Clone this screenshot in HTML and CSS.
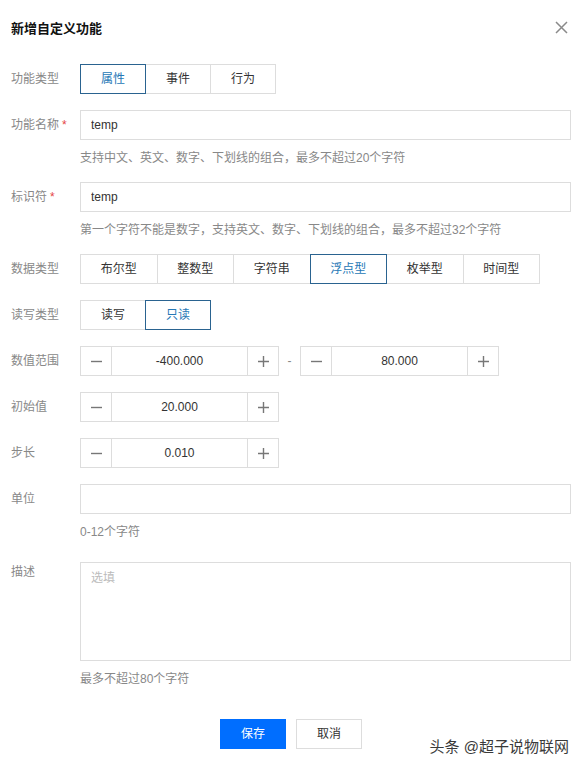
FILE: index.html
```html
<!DOCTYPE html>
<html lang="zh-CN">
<head>
<meta charset="utf-8">
<title>新增自定义功能</title>
<link rel="stylesheet" href="styles.css">
</head>
<body>
<div class="dialog">
  <div class="header">
    <h1 class="title">新增自定义功能</h1>
    <svg class="close" width="13" height="13" viewBox="0 0 13 13"><path d="M1 1L12 12M12 1L1 12" stroke="#8a8a8a" stroke-width="1.5" fill="none"/></svg>
  </div>

  <div class="form">
    <div class="field">
      <div class="label">功能类型</div>
      <div class="seg">
        <span class="seg-btn w65 active">属性</span>
        <span class="seg-btn w65">事件</span>
        <span class="seg-btn w65">行为</span>
      </div>
    </div>

    <div class="field tight">
      <div class="label">功能名称<span class="req">*</span></div>
      <input class="text" type="text" value="temp">
      <div class="hint">支持中文、英文、数字、下划线的组合，最多不超过20个字符</div>
    </div>

    <div class="field tight">
      <div class="label">标识符<span class="req">*</span></div>
      <input class="text" type="text" value="temp">
      <div class="hint">第一个字符不能是数字，支持英文、数字、下划线的组合，最多不超过32个字符</div>
    </div>

    <div class="field">
      <div class="label">数据类型</div>
      <div class="seg">
        <span class="seg-btn w77">布尔型</span>
        <span class="seg-btn w77">整数型</span>
        <span class="seg-btn w77">字符串</span>
        <span class="seg-btn w77 active">浮点型</span>
        <span class="seg-btn w77">枚举型</span>
        <span class="seg-btn w77">时间型</span>
      </div>
    </div>

    <div class="field">
      <div class="label">读写类型</div>
      <div class="seg">
        <span class="seg-btn w65">读写</span>
        <span class="seg-btn w65 active">只读</span>
      </div>
    </div>

    <div class="field">
      <div class="label">数值范围</div>
      <div class="range">
        <div class="stepper">
          <span class="step-btn"><svg width="11" height="11" viewBox="0 0 11 11"><path d="M0 5.5H11" stroke="#777" stroke-width="1.4"/></svg></span>
          <span class="step-val">-400.000</span>
          <span class="step-btn"><svg width="11" height="11" viewBox="0 0 11 11"><path d="M0 5.5H11M5.5 0V11" stroke="#777" stroke-width="1.4"/></svg></span>
        </div>
        <span class="dash">-</span>
        <div class="stepper">
          <span class="step-btn"><svg width="11" height="11" viewBox="0 0 11 11"><path d="M0 5.5H11" stroke="#777" stroke-width="1.4"/></svg></span>
          <span class="step-val">80.000</span>
          <span class="step-btn"><svg width="11" height="11" viewBox="0 0 11 11"><path d="M0 5.5H11M5.5 0V11" stroke="#777" stroke-width="1.4"/></svg></span>
        </div>
      </div>
    </div>

    <div class="field">
      <div class="label">初始值</div>
      <div class="range">
        <div class="stepper">
          <span class="step-btn"><svg width="11" height="11" viewBox="0 0 11 11"><path d="M0 5.5H11" stroke="#777" stroke-width="1.4"/></svg></span>
          <span class="step-val">20.000</span>
          <span class="step-btn"><svg width="11" height="11" viewBox="0 0 11 11"><path d="M0 5.5H11M5.5 0V11" stroke="#777" stroke-width="1.4"/></svg></span>
        </div>
      </div>
    </div>

    <div class="field">
      <div class="label">步长</div>
      <div class="range">
        <div class="stepper">
          <span class="step-btn"><svg width="11" height="11" viewBox="0 0 11 11"><path d="M0 5.5H11" stroke="#777" stroke-width="1.4"/></svg></span>
          <span class="step-val">0.010</span>
          <span class="step-btn"><svg width="11" height="11" viewBox="0 0 11 11"><path d="M0 5.5H11M5.5 0V11" stroke="#777" stroke-width="1.4"/></svg></span>
        </div>
      </div>
    </div>

    <div class="field unit">
      <div class="label">单位</div>
      <input class="text" type="text" value="">
      <div class="hint">0-12个字符</div>
    </div>

    <div class="field desc">
      <div class="label label-top">描述</div>
      <textarea class="area" placeholder="选填"></textarea>
      <div class="hint">最多不超过80个字符</div>
    </div>
  </div>

  <div class="footer">
    <span class="btn primary">保存</span>
    <span class="btn">取消</span>
  </div>

  <div class="watermark">头条 @超子说物联网</div>
</div>
</body>
</html>
```

FILE: styles.css
```css
* { box-sizing: border-box; }

html, body {
  margin: 0;
  padding: 0;
  background: #fff;
}

body {
  font-family: "Liberation Sans", "Noto Sans CJK SC", sans-serif;
  font-size: 12px;
  color: #333;
}

.dialog {
  position: relative;
  width: 582px;
  height: 766px;
  padding: 0 11px;
}

.header {
  height: 54px;
  display: flex;
  align-items: center;
  justify-content: space-between;
}

.title {
  margin: 0;
  font-size: 13px;
  font-weight: bold;
  color: #111;
}

.close {
  margin-right: 3px;
}

.form {
  margin-top: 10px;
  display: flex;
  flex-direction: column;
}

.field {
  display: grid;
  grid-template-columns: 69px 1fr;
  margin-bottom: 16px;
}

.field.tight { margin-bottom: 15px; }
.field.unit { margin-bottom: 21px; }
.field.desc { margin-bottom: 31px; }

.label {
  line-height: 30px;
  height: 30px;
  color: #888;
  white-space: nowrap;
}

.label-top {
  line-height: 20px;
  height: 20px;
}

.req {
  color: #e54545;
  margin-left: 3px;
}

.hint {
  grid-column: 2;
  margin-top: 9px;
  line-height: 18px;
  color: #888;
}

.text {
  height: 30px;
  width: 100%;
  border: 1px solid #ddd;
  padding: 0 10px;
  font-family: "Liberation Sans", "Noto Sans CJK SC", sans-serif;
  font-size: 12px;
  color: #333;
  outline: none;
  border-radius: 0;
}

.area {
  display: block;
  width: 100%;
  height: 99px;
  border: 1px solid #ddd;
  padding: 6px 10px;
  resize: none;
  font-family: "Liberation Sans", "Noto Sans CJK SC", sans-serif;
  font-size: 12px;
  line-height: 18px;
  color: #333;
  outline: none;
  border-radius: 0;
}

.area::placeholder {
  color: #bbb;
}

.seg {
  display: flex;
}

.seg-btn {
  position: relative;
  height: 30px;
  line-height: 28px;
  border: 1px solid #ddd;
  text-align: center;
  color: #333;
  background: #fff;
  margin-left: -1px;
}

.seg-btn:first-child { margin-left: 0; }

.seg-btn.w65 { width: 66px; }
.seg-btn.w77 { width: 77.5px; }

.seg-btn.active {
  border-color: #2a6390;
  color: #2678b6;
  z-index: 1;
}

.range {
  display: flex;
  align-items: center;
}

.stepper {
  display: flex;
  width: 199px;
  height: 30px;
  border: 1px solid #ddd;
}

.step-btn {
  width: 30px;
  display: flex;
  align-items: center;
  justify-content: center;
}

.step-val {
  flex: 1;
  border-left: 1px solid #ddd;
  border-right: 1px solid #ddd;
  text-align: center;
  line-height: 28px;
  color: #333;
}

.dash {
  width: 21px;
  text-align: center;
  color: #888;
}

.footer {
  display: flex;
  justify-content: center;
  gap: 10px;
}

.btn {
  width: 66px;
  height: 30px;
  line-height: 28px;
  text-align: center;
  border: 1px solid #ddd;
  background: #fff;
  color: #333;
}

.btn.primary {
  background: #006eff;
  border-color: #006eff;
  color: #fff;
}

.watermark {
  position: absolute;
  right: 13px;
  bottom: 10px;
  font-size: 15px;
  color: #3a3a3a;
  text-shadow: 0 0 2px #fff, 0 0 2px #fff;
  letter-spacing: 0;
}
```
